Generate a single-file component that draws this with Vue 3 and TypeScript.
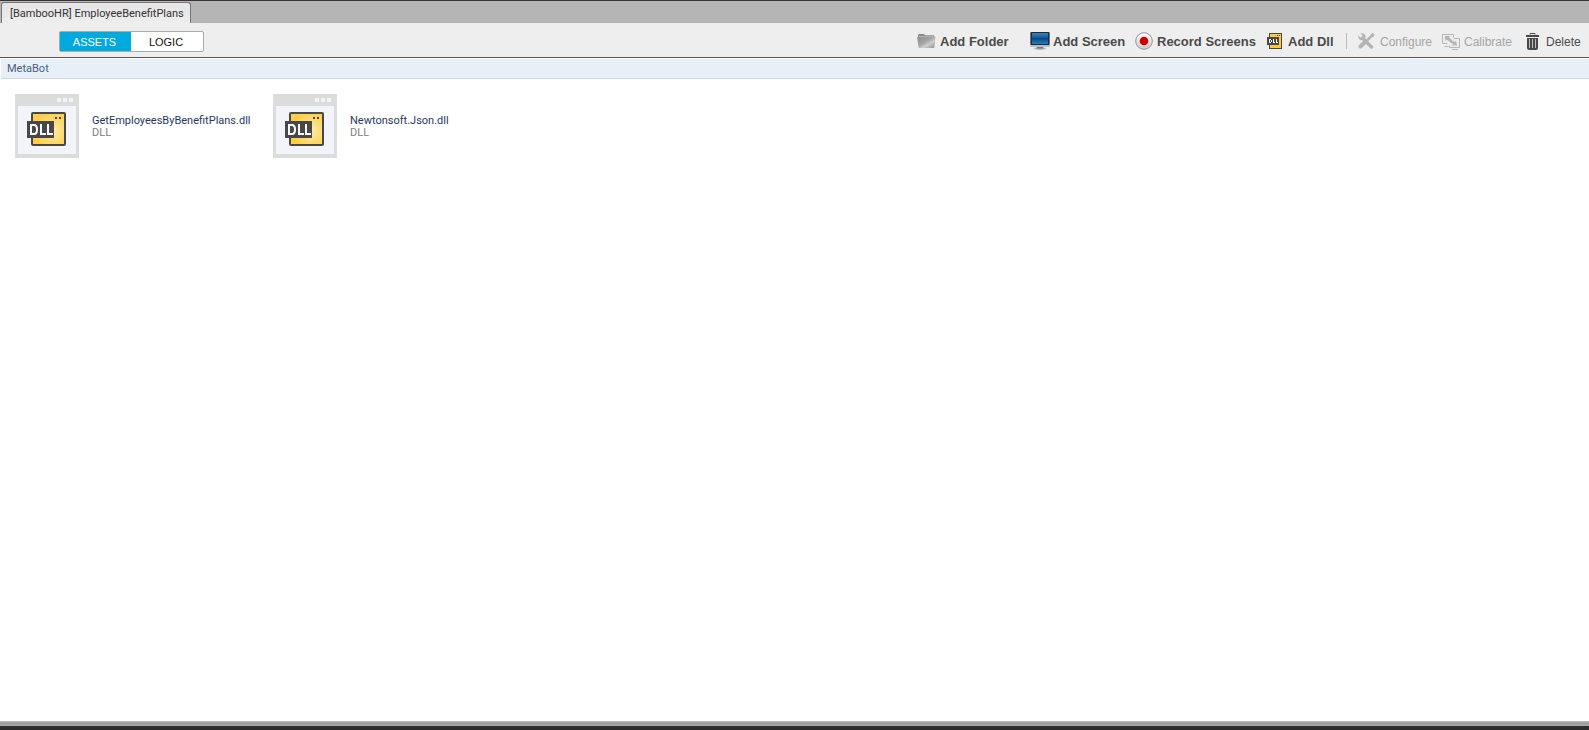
<script setup lang="ts">
import { ref } from 'vue'

interface Asset {
  name: string
  kind: string
}

const title = '[BambooHR] EmployeeBenefitPlans'
const views = ['ASSETS', 'LOGIC']
const activeView = ref('ASSETS')
const assets: Asset[] = [
  { name: 'GetEmployeesByBenefitPlans.dll', kind: 'DLL' },
  { name: 'Newtonsoft.Json.dll', kind: 'DLL' },
]
</script>

<template>
  <div class="window">
    <header class="tabs">
      <button class="tab" type="button">{{ title }}</button>
    </header>

    <div class="toolbar">
      <div class="switch">
        <button
          v-for="view in views"
          :key="view"
          type="button"
          class="switch-item"
          :class="{ active: view === activeView }"
          @click="activeView = view"
        >{{ view }}</button>
      </div>

      <div class="actions">
        <button class="action strong" type="button">
          <svg class="icon" width="19" height="16" viewBox="0 0 20 17">
            <defs>
              <linearGradient id="folder" x1="0" y1="0" x2="1" y2="1">
                <stop offset="0" stop-color="#8c8c8c" />
                <stop offset="0.45" stop-color="#a5a5a5" />
                <stop offset="0.65" stop-color="#cecece" />
                <stop offset="1" stop-color="#8f8f8f" />
              </linearGradient>
            </defs>
            <path d="M1 2.500 2 1h5l1.500 1.500H18L18.500 5H1z" fill="#858585" />
            <path d="M2 3h15.500v2H2z" fill="#b4b4b4" />
            <path d="M0 4.500h6.500L8 4h11.500L18.500 15q-.2 1-1.200 1H2.700q-1 0-1.200-1z" fill="url(#folder)" />
          </svg>
          <span>Add Folder</span>
        </button>
        <button class="action strong screen" type="button">
          <svg class="icon" width="20" height="20" viewBox="0 0 20 20">
            <defs>
              <linearGradient id="display" x1="0" y1="0" x2="0" y2="1">
                <stop offset="0" stop-color="#3b7db5" />
                <stop offset="0.35" stop-color="#1a65a5" />
                <stop offset="0.5" stop-color="#0b467c" />
                <stop offset="1" stop-color="#2880be" />
              </linearGradient>
            </defs>
            <ellipse cx="10" cy="17.500" rx="6" ry="1.500" fill="#b5b8bc" />
            <path d="M7.500 15h5l1 2.500h-7z" fill="#73797f" />
            <rect x="0" y="1" width="20" height="15" rx="1" fill="#b6bec6" />
            <rect x="0.500" y="1" width="19" height="13" rx="1" fill="#202c38" />
            <rect x="2" y="2" width="16" height="11" fill="url(#display)" />
          </svg>
          <span>Add Screen</span>
        </button>
        <button class="action strong" type="button">
          <svg class="icon" width="18" height="18" viewBox="0 0 18 18">
            <defs>
              <linearGradient id="record" x1="0" y1="0" x2="0" y2="1">
                <stop offset="0" stop-color="#ffffff" />
                <stop offset="1" stop-color="#cccccc" />
              </linearGradient>
            </defs>
            <circle cx="9" cy="9" r="8.300" fill="url(#record)" stroke="#939393" />
            <circle cx="9" cy="9" r="4.300" fill="#cc0000" />
          </svg>
          <span>Record Screens</span>
        </button>
        <button class="action strong dll" type="button">
          <svg class="icon" width="15" height="16" viewBox="0 0 15 16" shape-rendering="crispEdges">
            <rect x="2" y="0" width="13" height="16" fill="#484848" />
            <rect x="3" y="1" width="11" height="14" fill="#fbc944" />
            <path d="M10 2h1v1h-1zM12 2h1v1h-1z" fill="#484848" />
            <rect x="0" y="4" width="12" height="8" fill="#484848" />
            <path d="M2.500 6v4M2 6.500h2M2 9.500h2M4.500 7v2M6.500 6v4M6 9.500h2M9.500 6v4M9 9.500h2" fill="none" stroke="#fff" />
          </svg>
          <span>Add Dll</span>
        </button>
        <span class="divider"></span>
        <button class="action tool" type="button" disabled>
          <svg class="icon" width="17" height="16" viewBox="0 0 17 16">
            <path d="M4.500 5 13.500 14" stroke="#b4b4b4" stroke-width="3.500" stroke-linecap="round" />
            <path d="M.5 2.500 3 5 5 3.500 2.800.5C5-.5 8 1 7.500 4.500L5.500 7C2 8-.5 5.500.5 2.500z" fill="#b4b4b4" />
            <path d="M15.500 1 9 7.500" stroke="#b4b4b4" stroke-width="2.500" />
            <path d="M7.500 8.500 2.500 13.500" stroke="#b4b4b4" stroke-width="4" stroke-linecap="round" />
            <path d="m12.500 1.500 2.500-1.500L16.500 1.500 15 4.500z" fill="#b4b4b4" />
          </svg>
          <span>Configure</span>
        </button>
        <button class="action" type="button" disabled>
          <svg class="icon" width="18" height="17" viewBox="0 0 18 17" fill="none" stroke="#b5b5b5">
            <path d="M.5 10.500v-9h11v3M.5 10.500h5M2.500 13.500h4M7.500 14.500v-2M12 5.500h5.500v9h-10M10 16.500h6" />
            <path d="M3 3h5L7 4.500l2 1.500 1 1.500 3 1.500 1-1.500 1 5h-5l1-1.500-3-1.500-1-1.500L4 6.500 3 8z" fill="#b5b5b5" stroke="none" />
          </svg>
          <span>Calibrate</span>
        </button>
        <button class="action delete" type="button">
          <svg class="icon" width="13" height="17" viewBox="0 0 13 17">
            <path d="M4 1.500V.5h5v1" fill="none" stroke="#484848" />
            <path d="M0 2h13v2H0z" fill="#484848" />
            <path d="M1 5h11v10q0 2-2 2H3q-2 0-2-2z" fill="#484848" />
            <path d="M3.500 6v9M6.500 6v9M9.500 6v9" stroke="#bcbcbc" />
          </svg>
          <span>Delete</span>
        </button>
      </div>
    </div>

    <nav class="path"><a href="#">MetaBot</a></nav>

    <main class="assets">
      <article v-for="asset in assets" :key="asset.name" class="asset">
        <svg class="thumb" width="64" height="64" viewBox="0 0 64 64">
          <defs>
            <radialGradient id="gold" cx="0.650" cy="0.550" r="0.600">
              <stop offset="0" stop-color="#ffebab" />
              <stop offset="1" stop-color="#ffcd46" />
            </radialGradient>
          </defs>
          <rect width="64" height="64" fill="#dcdcdc" />
          <path d="M42 4h4v4h-4zM48 4h4v4h-4zM54 4h4v4h-4z" fill="#f3f3fa" />
          <rect x="3" y="12" width="58" height="48" fill="#f3f3fa" />
          <rect x="17" y="19" width="33" height="32" rx="1" fill="url(#gold)" stroke="#484848" stroke-width="2" />
          <path d="M40 23h2v2h-2zM44 23h2v2h-2z" fill="#484848" />
          <rect x="12" y="27" width="27" height="17" fill="#484848" />
          <path d="M16 31v9M15 31h4q3 0 3 4.500t-3 4.500h-4M26 30v10h5M33 30v10h5" fill="none" stroke="#fff" stroke-width="2" />
        </svg>
        <div class="details">
          <div class="name">{{ asset.name }}</div>
          <div class="kind">{{ asset.kind }}</div>
        </div>
      </article>
    </main>

    <footer class="edge"></footer>
  </div>
</template>

<style>
body {
  margin: 0;
}
</style>

<style scoped>
.window {
  display: flex;
  flex-direction: column;
  min-height: 100vh;
  background: #fff;
  font-family: Roboto, sans-serif;
  font-size: 11px;
}

button {
  margin: 0;
  padding: 0;
  border: 0;
  background: none;
  font: inherit;
  color: inherit;
}

.tabs {
  display: flex;
  height: 22px;
  padding-left: 1px;
  border-top: 1px solid #383436;
  background: #b5b5b5;
}

.tab {
  margin-top: 1px;
  padding: 0 6px 0 8px;
  border: 1px solid #777;
  border-bottom: 0;
  border-radius: 3px 3px 0 0;
  background: linear-gradient(#e6e4e5, #eee);
  color: #333;
}

.toolbar {
  display: flex;
  align-items: center;
  justify-content: space-between;
  height: 34px;
  border-bottom: 1px solid #555;
  background: #eee;
  font-family: "Liberation Sans", Arial, sans-serif;
}

.switch {
  display: grid;
  grid-template-columns: 71px 72px;
  height: 19px;
  margin: 2px 0 0 59px;
  border: 1px solid #aaa;
  border-radius: 2px;
  background: #fff;
}

.switch-item {
  padding: 2px 2px 0 0;
  color: #111;
}

.switch-item.active {
  background: #00aade;
  color: #fff;
}

.actions {
  display: grid;
  grid-template-columns: 113px 105px 132px 79px 12px 84px 84px 63px;
  align-items: center;
  padding-top: 2px;
  font-size: 12px;
  color: #4a4a4a;
}

.action {
  display: flex;
  align-items: center;
  gap: 4px;
  height: 20px;
  white-space: nowrap;
}

.action:disabled {
  color: #a5a5a5;
}

.action span {
  padding-top: 1px;
}

.strong {
  font-size: 13px;
  font-weight: bold;
}

.screen {
  gap: 3px;
}

.tool {
  gap: 5px;
}

.dll {
  gap: 6px;
}

.delete {
  gap: 7px;
}

.icon,
.thumb {
  flex: none;
}

.divider {
  width: 1px;
  height: 16px;
  background: #bbb;
}

.path {
  margin: 1px 0 0 1px;
  padding: 1px 6px 0;
  border-bottom: 1px solid #ccd8e6;
  background: #e8f0f7;
  line-height: 18px;
}

.path a {
  color: #4d5c80;
  text-decoration: none;
}

.assets {
  display: flex;
  flex: 1;
  flex-wrap: wrap;
  align-content: flex-start;
  padding: 15px;
}

.asset {
  display: flex;
  gap: 13px;
  width: 258px;
}

.details {
  padding-top: 21px;
  line-height: 12px;
}

.name {
  color: #1f3864;
}

.kind {
  color: #808080;
}

.edge {
  height: 5px;
  border-bottom: 4px solid #2e2c2e;
  background: linear-gradient(#c0c0c0, #989898 50%, #b0b0b0);
}
</style>
